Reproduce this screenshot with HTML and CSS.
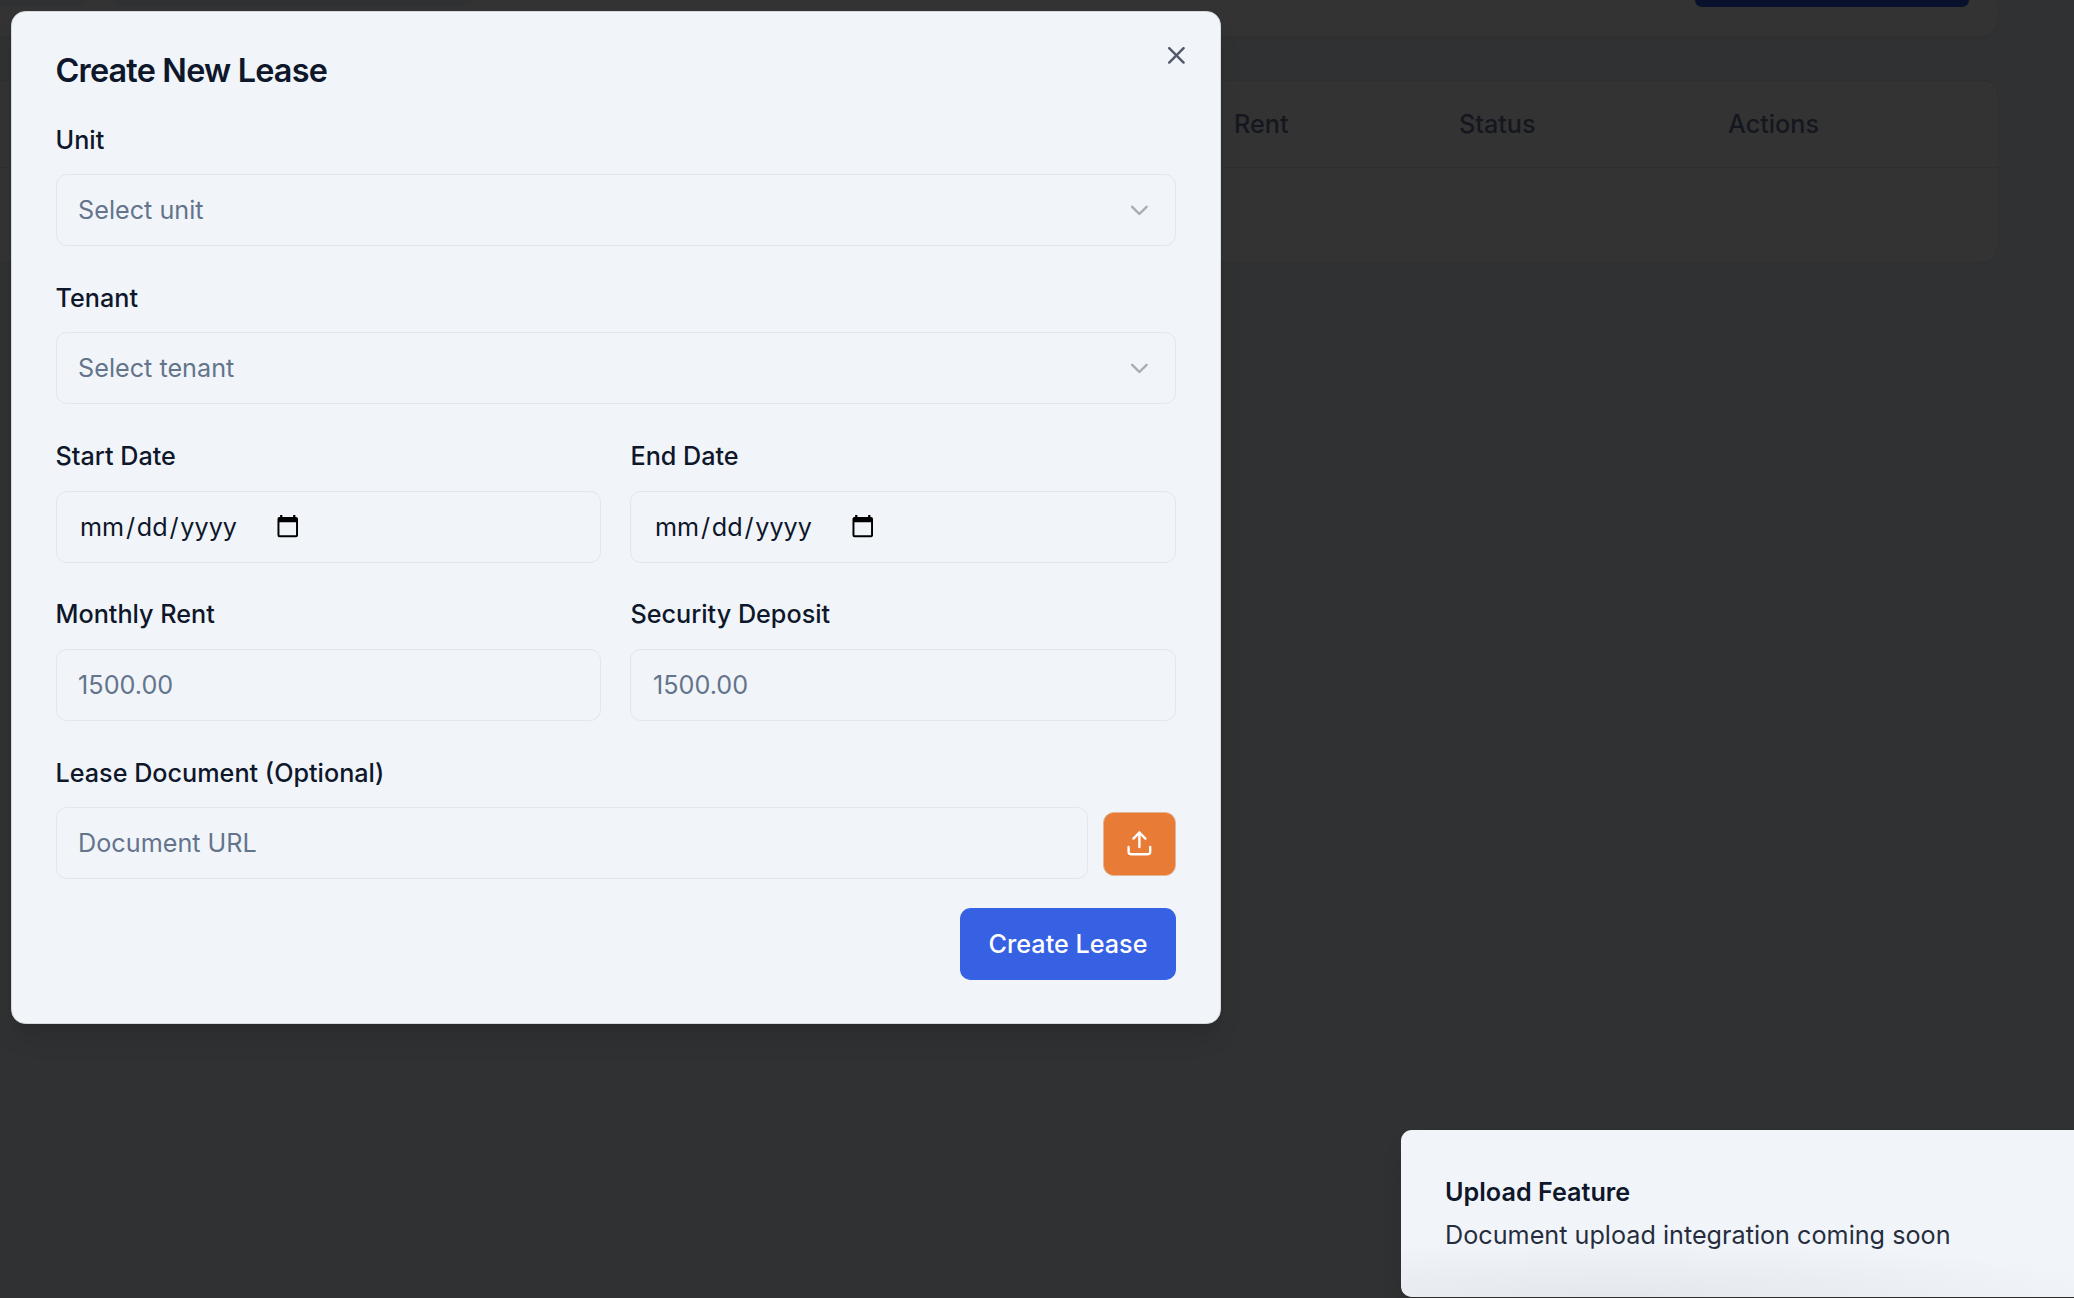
FILE: index.html
```html
<!DOCTYPE html>
<html lang="en">
<head>
<meta charset="utf-8">
<title>Leases</title>
<link rel="stylesheet" href="styles.css">
</head>
<body>
<main class="page">
  <section class="card filters">
    <div class="filter filter-short"></div>
    <div class="filter filter-long"></div>
    <div class="new-lease"></div>
  </section>
  <section class="card table">
    <div class="table-head">
      <span></span>
      <span>Rent</span>
      <span>Status</span>
      <span>Actions</span>
    </div>
    <div class="table-body"></div>
  </section>
</main>

<div class="dialog" role="dialog" aria-labelledby="dialog-title">
  <svg class="icon close" viewBox="0 0 24 24"><path d="M18 6 6 18"/><path d="m6 6 12 12"/></svg>
  <h2 class="dialog-title" id="dialog-title">Create New Lease</h2>
  <form class="form">
    <div class="field">
      <label class="label">Unit</label>
      <div class="control select"><span>Select unit</span><svg class="icon chevron" viewBox="0 0 24 24"><path d="m6 9 6 6 6-6"/></svg></div>
    </div>
    <div class="field">
      <label class="label">Tenant</label>
      <div class="control select"><span>Select tenant</span><svg class="icon chevron" viewBox="0 0 24 24"><path d="m6 9 6 6 6-6"/></svg></div>
    </div>
    <div class="pair">
      <div class="field">
        <label class="label">Start Date</label>
        <div class="control date"><span class="date-text"><span>mm</span><span>/</span><span>dd</span><span>/</span><span>yyyy</span></span><svg class="calendar" viewBox="0 0 22 23"><path fill-rule="evenodd" d="M3.2 0h2.300v2h11V0h2.300v2h.7a2 2 0 0 1 2 2v16.700a2 2 0 0 1-2 2h-17a2 2 0 0 1-2-2V4a2 2 0 0 1 2-2h.7zM2.500 7.300v13.400h17V7.300z"/></svg></div>
      </div>
      <div class="field">
        <label class="label">End Date</label>
        <div class="control date"><span class="date-text"><span>mm</span><span>/</span><span>dd</span><span>/</span><span>yyyy</span></span><svg class="calendar" viewBox="0 0 22 23"><path fill-rule="evenodd" d="M3.2 0h2.300v2h11V0h2.300v2h.7a2 2 0 0 1 2 2v16.700a2 2 0 0 1-2 2h-17a2 2 0 0 1-2-2V4a2 2 0 0 1 2-2h.7zM2.500 7.300v13.400h17V7.300z"/></svg></div>
      </div>
    </div>
    <div class="pair">
      <div class="field">
        <label class="label">Monthly Rent</label>
        <div class="control">1500.00</div>
      </div>
      <div class="field">
        <label class="label">Security Deposit</label>
        <div class="control">1500.00</div>
      </div>
    </div>
    <div class="field">
      <label class="label">Lease Document (Optional)</label>
      <div class="document">
        <div class="control url">Document URL</div>
        <button class="upload" type="button" aria-label="Upload"><svg class="icon" viewBox="0 0 24 24"><path d="M21 15v4a2 2 0 0 1-2 2H5a2 2 0 0 1-2-2v-4"/><path d="m17 8-5-5-5 5"/><path d="M12 3v12"/></svg></button>
      </div>
    </div>
    <div class="actions"><button class="submit" type="button">Create Lease</button></div>
  </form>
</div>

<div class="toast" role="status">
  <div class="toast-title">Upload Feature</div>
  <div class="toast-text">Document upload integration coming soon</div>
</div>
</body>
</html>
```
FILE: styles.css
```css
* { box-sizing: border-box; }

body {
  margin: 0;
  width: 2074px;
  height: 1298px;
  position: relative;
  overflow: hidden;
  background: #303132;
  color: #0f172a;
  font-family: Inter, "Liberation Sans", sans-serif;
  font-size: 25.2px;
}

/* Dimmed page behind the dialog */
.page { width: 1997px; display: flex; flex-direction: column; gap: 44px; }
.card { background: #333; box-shadow: 0 1px 3px rgba(0, 0, 0, .05); }
.filters {
  height: 36px;
  padding-right: 28px;
  display: flex;
  align-items: flex-start;
  border-radius: 0 0 14px 0;
}
.filter { height: 6px; background: #303132; }
.filter-short { width: 84px; border-radius: 0 0 11px 0; }
.filter-long { width: 359px; margin-left: 29px; border-radius: 0 0 11px 11px; }
.new-lease { width: 274px; height: 7px; margin-left: auto; background: #08122d; border-radius: 0 0 11px 11px; }
.table { height: 182px; border-radius: 0 14px 14px 0; border-top: 1px solid #2f2f2f; }
.table-head {
  height: 87px;
  display: grid;
  grid-template-columns: 1234px 225px 269px 1fr;
  align-items: center;
  border-bottom: 1px solid #2e2e2e;
  color: #15171e;
  font-weight: 500;
}

/* Dialog */
.dialog {
  position: absolute;
  left: 11px;
  top: 11px;
  width: 1210px;
  height: 1013px;
  padding: 42.500px 44px 43px 43.500px;
  border: 1px solid #d5d8dc;
  border-radius: 14.400px;
  background: #f1f5fa;
  box-shadow: 0 18px 27px -5px rgba(0, 0, 0, .1), 0 7px 11px -7px rgba(0, 0, 0, .1);
}
.icon {
  width: 28.800px;
  height: 28.800px;
  fill: none;
  stroke: currentColor;
  stroke-width: 2;
  stroke-linecap: round;
  stroke-linejoin: round;
}
.close { position: absolute; right: 29.200px; top: 29.300px; opacity: .7; }
.dialog-title {
  margin: 0 0 30px;
  font-size: 32.400px;
  line-height: 32.400px;
  font-weight: 600;
  letter-spacing: -.025em;
}
.form { display: flex; flex-direction: column; gap: 28.800px; }
.field { display: flex; flex-direction: column; gap: 12.400px; }
.label { height: 45px; padding-top: 2px; line-height: 43px; font-weight: 500; }
.pair { display: grid; grid-template-columns: 1fr 1fr; gap: 29.400px; }
.control {
  height: 72px;
  padding: 0 21.600px;
  display: flex;
  align-items: center;
  border: 1px solid #e3e7ec;
  border-radius: 10.800px;
  color: #64748b;
}
.select { justify-content: space-between; }
.chevron { color: #0f172a; opacity: .32; }
.date { color: #0f172a; gap: 40px; padding-left: 23.500px; }
.date-text { display: flex; gap: 1.800px; }
.calendar { width: 21.500px; height: 22.500px; fill: #000; }
.document { display: flex; align-items: center; gap: 14.800px; }
.url { flex: 1; }
.upload, .submit { border: 0; padding: 0; font: inherit; color: #fff; border-radius: 10.800px; }
.upload {
  width: 73px;
  height: 64px;
  margin-top: 1px;
  display: flex;
  align-items: center;
  justify-content: center;
  background: #e87b35;
  border: 1px solid #e2b594;
}
.actions { display: flex; justify-content: flex-end; }
.submit { width: 216px; height: 72px; background: #3761e3; font-weight: 500; }

/* Toast */
.toast {
  position: absolute;
  left: 1401px;
  top: 1130px;
  width: 700px;
  height: 167px;
  padding: 44px;
  border-radius: 10.800px;
  background:
    radial-gradient(ellipse 520px 56px at 210px 100%, rgba(70, 80, 80, .08), rgba(70, 80, 80, .045) 50%, transparent),
    #f1f5fa;
  box-shadow: 0 18px 27px -5px rgba(0, 0, 0, .14);
}
.toast-title { line-height: 36px; font-weight: 600; }
.toast-text { margin-top: 7px; line-height: 36px; opacity: .9; }
```
